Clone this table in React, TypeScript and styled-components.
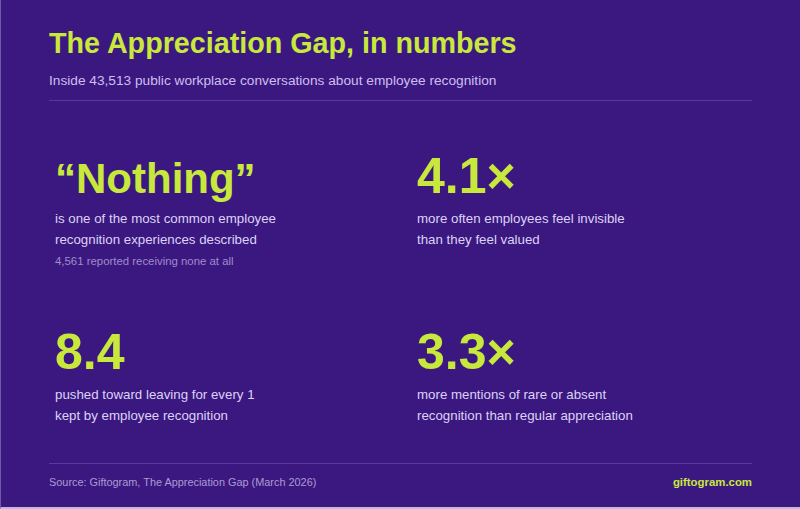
import styled, { createGlobalStyle } from 'styled-components';

const GlobalStyle = createGlobalStyle`
  html, body {
    margin: 0;
    padding: 0;
    background: #3b1880;
  }
  * {
    box-sizing: border-box;
  }
`;

const LIME = '#c8e83c';

const Wrap = styled.div`
  width: 800px;
  height: 509px;
  padding: 26px 48px 0;
  display: flex;
  flex-direction: column;

  background: #3b1880;
  border-left: 1px solid #6c5aa4;
  border-bottom: 2px solid #c6b6e4;
  font-family: 'Liberation Sans', Arial, sans-serif;
`;

const Title = styled.h1`
  margin: 0;
  color: ${LIME};
  font-size: 28.7px;
  line-height: 34px;
  font-weight: bold;
`;

const Subtitle = styled.p`
  margin: 13px 0 0;
  color: #cdbfee;
  font-size: 13.7px;
  line-height: 16px;
`;

const Divider = styled.hr`
  margin: 11px 0 0;
  border: 0;
  border-top: 1px solid #5835a6;
`;

const Stats = styled.div`
  flex: 1;
  display: grid;
  grid-template-columns: 328px 328px;
  grid-template-rows: 176px auto;
  column-gap: 34px;
  padding: 57px 6px 0;
`;

const Stat = styled.div`
  display: flex;
  flex-direction: column;
`;

// numbers are set larger than the word stat, baselines kept level
const Value = styled.div<{ $numeric?: boolean }>`
  height: 42px;
  color: ${LIME};
  font-size: ${(p) => (p.$numeric ? '50px' : '42px')};
  line-height: ${(p) => (p.$numeric ? '37px' : '42px')};
  font-weight: bold;
  white-space: nowrap;
`;

const Desc = styled.p`
  margin: 8px 0 0;
  color: #ddd2f5;
  font-size: 13.3px;
  line-height: 21px;
`;

const Note = styled.p`
  margin: 4px 0 0;
  color: #9f8ccb;
  font-size: 11.4px;
  line-height: 14px;
`;

const Footer = styled.footer`
  height: 36px;
  margin-bottom: 8px;
  display: flex;
  align-items: center;
  justify-content: space-between;
  border-top: 1px solid #5b38aa;
`;

const Source = styled.span`
  color: #ab9bd4;
  font-size: 10.9px;
`;

const Site = styled.span`
  color: ${LIME};
  font-size: 11.4px;
  font-weight: bold;
`;

const stats = [
  {
    value: '\u201cNothing\u201d',
    lines: ['is one of the most common employee', 'recognition experiences described'],
    note: '4,561 reported receiving none at all',
  },
  {
    value: '4.1\u00d7',
    numeric: true,
    lines: ['more often employees feel invisible', 'than they feel valued'],
  },
  {
    value: '8.4',
    numeric: true,
    lines: ['pushed toward leaving for every 1', 'kept by employee recognition'],
  },
  {
    value: '3.3\u00d7',
    numeric: true,
    lines: ['more mentions of rare or absent', 'recognition than regular appreciation'],
  },
];

const App = () => {
  return (
    <>
      <GlobalStyle />
      <Wrap>
        <Title>The Appreciation Gap, in numbers</Title>
        <Subtitle>Inside 43,513 public workplace conversations about employee recognition</Subtitle>
        <Divider />

        <Stats>
          {stats.map((s) => (
            <Stat key={s.value}>
              <Value $numeric={s.numeric}>{s.value}</Value>
              <Desc>
                {s.lines[0]}
                <br />
                {s.lines[1]}
              </Desc>
              {s.note && <Note>{s.note}</Note>}
            </Stat>
          ))}
        </Stats>

        <Footer>
          <Source>Source: Giftogram, The Appreciation Gap (March 2026)</Source>
          <Site>giftogram.com</Site>
        </Footer>
      </Wrap>
    </>
  );
};

export default App;
